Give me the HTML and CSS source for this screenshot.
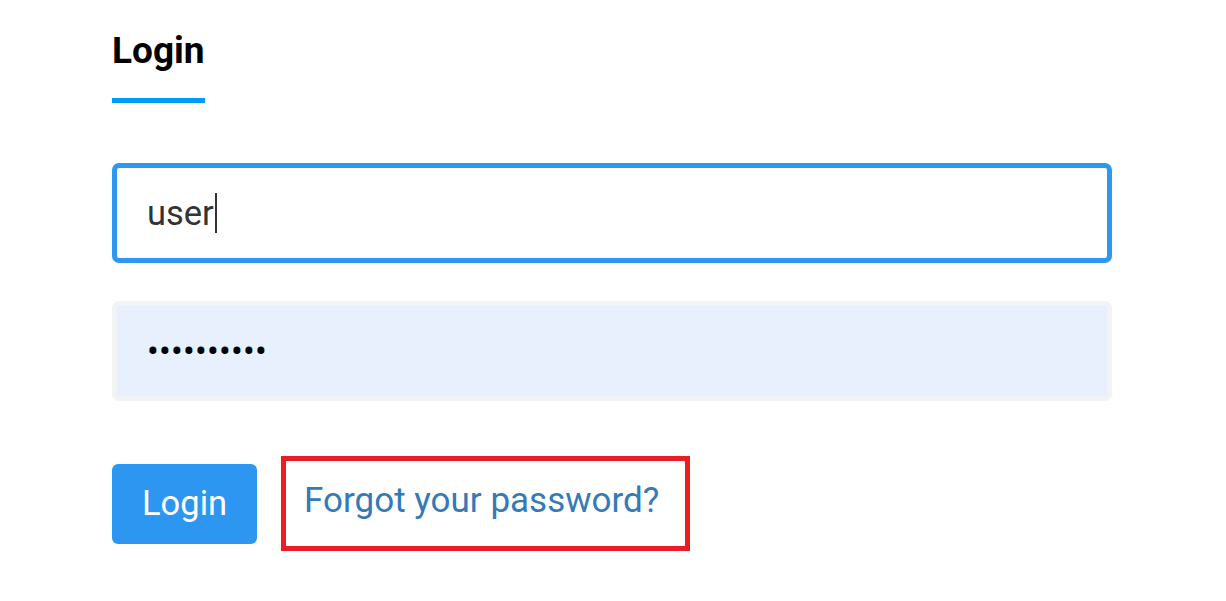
FILE: index.html
```html
<!DOCTYPE html>
<html lang="en">
<head>
  <meta charset="UTF-8">
  <meta name="viewport" content="width=device-width, initial-scale=1.0">
  <title>Login</title>
  <link rel="stylesheet" href="styles.css">
</head>
<body>

  <div class="login-page">
    <h2 class="login-title">Login</h2>

    <form class="login-form">
      <div class="field focused">
        <span class="field-text">user</span><span class="caret"></span>
      </div>
      <div class="field filled">
        <span class="field-dots">••••••••••</span>
      </div>

      <div class="actions">
        <button type="button" class="btn-login">Login</button>
        <a href="#" class="forgot-link">Forgot your password?</a>
      </div>
    </form>
  </div>

</body>
</html>
```

FILE: styles.css
```css
* { box-sizing: border-box; margin: 0; padding: 0; }
body {
  font-family: Roboto, "Liberation Sans", Arial, sans-serif;
  background: #fff;
  color: #000;
}
.login-page {
  width: 1000px;
  margin-left: 112px;
  padding-top: 29px;
}
.login-title {
  display: inline-block;
  font-size: 37px;
  font-weight: bold;
  line-height: 43px;
  padding-bottom: 26px;
  border-bottom: 5px solid #0399f7;
}
.login-form {
  margin-top: 60px;
  display: flex;
  flex-direction: column;
}
.field {
  height: 100px;
  border-radius: 7px;
  padding-left: 30px;
  display: flex;
  align-items: center;
}
.field.focused {
  border: 5px solid #2d97f2;
  background: #fff;
}
.field.filled {
  margin-top: 38px;
  border: 5px solid #f2f3f5;
  background: #e8f0fe;
}
.field-text {
  font-size: 34.5px;
  color: #333;
}
.caret {
  display: inline-block;
  width: 2px;
  height: 40px;
  background: #333;
  margin-left: 1px;
}
.field-dots {
  font-size: 35px;
  letter-spacing: 0.2px;
  color: #000;
}
.actions {
  margin-top: 55px;
  display: flex;
  align-items: center;
}
.btn-login {
  height: 80px;
  padding: 0 30px 2px;
  background: #2d96f0;
  color: #fff;
  border: none;
  border-radius: 6px;
  font-family: inherit;
  font-size: 34.5px;
}
.forgot-link {
  margin-left: 24px;
  height: 95px;
  padding: 0 26px 6px 18px;
  border: 5px solid #ec1c24;
  display: flex;
  align-items: center;
  color: #337ab7;
  font-size: 35px;
  text-decoration: none;
}
```
